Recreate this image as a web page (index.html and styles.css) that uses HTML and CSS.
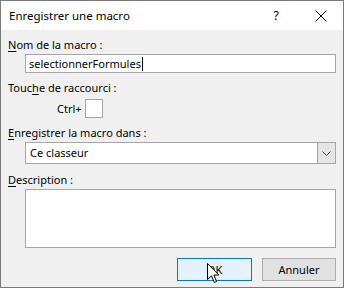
FILE: index.html
```html
<!DOCTYPE html>
<html lang="fr">
<head>
<meta charset="utf-8">
<title>Enregistrer une macro</title>
<link rel="stylesheet" href="styles.css">
</head>
<body>
<div class="window">
  <div class="titlebar">
    <span class="title">Enregistrer une macro</span>
    <span class="help">?</span>
    <svg class="close" width="12" height="12" viewBox="0 0 12 12"><path d="M0.5 0.5 L11.5 11.5 M11.5 0.5 L0.5 11.5" stroke="#000" stroke-width="1" fill="none"/></svg>
  </div>
  <div class="content">
    <div class="label l1"><u>N</u>om de la macro :</div>
    <div class="field input">selectionnerFormules<span class="caret"></span></div>
    <div class="label l2">Touc<u>h</u>e de raccourci :</div>
    <div class="shortcut">
      <span class="ctrl">Ctrl+</span>
      <span class="keybox"></span>
    </div>
    <div class="label l3"><u>E</u>nregistrer la macro dans :</div>
    <div class="field select">
      <span class="seltext">Ce classeur</span>
      <span class="drop"><svg width="9" height="5" viewBox="0 0 9 5"><path d="M0.5 0.5 L4.5 4.5 L8.5 0.5" stroke="#444" stroke-width="1" fill="none"/></svg></span>
    </div>
    <div class="label l4"><u>D</u>escription :</div>
    <div class="field textarea"></div>
    <div class="buttons">
      <div class="btn ok">OK</div>
      <div class="btn cancel">Annuler</div>
    </div>
  </div>
  <svg class="cursor" width="13" height="21" viewBox="0 0 13 21"><path d="M0.5 0.5 L0.5 16.5 L4.5 12.8 L7.3 19.5 L9.6 18.5 L6.9 12 L11.8 12 Z" fill="#fff" stroke="#000" stroke-width="1" stroke-linejoin="miter"/></svg>
</div>
</body>
</html>
```
FILE: styles.css
```css
html, body {
  margin: 0;
  padding: 0;
  background: #f0f0f0;
}
body {
  font-family: "Noto Sans", "Liberation Sans", sans-serif;
  font-size: 11px;
  color: #000;
}
.window {
  position: relative;
  width: 344px;
  height: 288px;
  box-sizing: border-box;
  border: 1px solid #7a7a7a;
  background: #f0f0f0;
  overflow: hidden;
}
.titlebar {
  height: 29px;
  background: #fff;
  display: flex;
  align-items: center;
  padding-left: 8px;
}
.title {
  flex: 1;
  font-size: 11.5px;
  line-height: 16px;
}
.help {
  font-size: 12.5px;
  margin-right: 36px;
  line-height: 16px;
}
.close {
  margin-right: 16px;
  display: block;
}
.content {
  padding: 7px 7px 0 24px;
}
.label {
  line-height: 16px;
  margin-left: -17px;
}
.label u {
  text-decoration-thickness: 1px;
  text-underline-offset: 2px;
}
.l2 { margin-top: 7px; }
.l3 { margin-top: 7px; }
.l4 { margin-top: 8px; }
.field {
  box-sizing: border-box;
  background: #fff;
  border: 1px solid #a5a5a5;
  margin-top: 1px;
}
.input {
  height: 19px;
  line-height: 17px;
  padding-left: 3px;
  display: flex;
  align-items: center;
}
.caret {
  display: inline-block;
  width: 1px;
  height: 14px;
  background: #000;
  margin-left: 1px;
}
.shortcut {
  display: flex;
  align-items: center;
  margin-top: 3px;
  padding-left: 32px;
}
.ctrl {
  line-height: 16px;
  margin-right: 3px;
}
.keybox {
  width: 18px;
  height: 19px;
  box-sizing: border-box;
  background: #fff;
  border: 1px solid #a5a5a5;
}
.select {
  height: 22px;
  display: flex;
  align-items: stretch;
}
.seltext {
  flex: 1;
  line-height: 20px;
  padding-left: 4px;
}
.drop {
  width: 17px;
  background: #e5e5e5;
  border-left: 1px solid #a5a5a5;
  display: flex;
  align-items: center;
  justify-content: center;
}
.drop svg { display: block; }
.textarea {
  height: 59px;
}
.buttons {
  display: flex;
  justify-content: flex-end;
  gap: 10px;
  margin-top: 10px;
}
.btn {
  box-sizing: border-box;
  height: 23px;
  line-height: 21px;
  text-align: center;
}
.ok {
  width: 75px;
  background: #e5f1fb;
  border: 1px solid #0078d7;
}
.cancel {
  width: 74px;
  background: #e1e1e1;
  border: 1px solid #adadad;
}
.cursor {
  position: absolute;
  left: 206px;
  top: 262px;
  display: block;
}
```
